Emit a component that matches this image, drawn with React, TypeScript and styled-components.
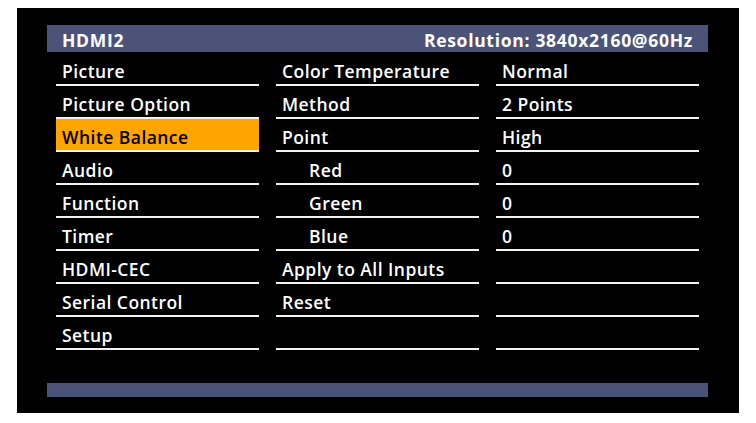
import React from "react";
import styled, { createGlobalStyle } from "styled-components";

const Global = createGlobalStyle`
  html, body { margin: 0; padding: 0; background: #ffffff; }
  body { font-family: "Open Sans", "Noto Sans", sans-serif; }
`;

const Screen = styled.div`
  box-sizing: border-box;
  margin: 8px 0 0 17px;
  width: 722px;
  height: 405px;
  background: #000000;
  padding: 17px 0 0 30px;
  display: flex;
  flex-direction: column;
`;

const Bar = styled.div`
  box-sizing: border-box;
  width: 661px;
  background: #4b5379;
`;

const HeaderBar = styled(Bar)`
  height: 27px;
  display: flex;
  align-items: center;
  justify-content: space-between;
  padding: 3px 15px 0 15px;
  color: #ffffff;
  font-weight: 700;
  font-size: 17.5px;
  letter-spacing: 0.7px;
`;

const FooterBar = styled(Bar)`
  height: 14px;
  margin-top: 33px;
`;

const Columns = styled.div`
  display: grid;
  grid-template-columns: repeat(3, 203px);
  column-gap: 17px;
  margin: 1px 0 0 9px;
`;

const Column = styled.div`
  display: flex;
  flex-direction: column;
`;

const Row = styled.div<{ $active?: boolean; $indent?: boolean }>`
  box-sizing: border-box;
  height: 33px;
  display: flex;
  align-items: center;
  padding: 4px 0 0 ${(p) => (p.$indent ? 33 : 6)}px;
  border-bottom: 2px solid ${(p) => (p.$active ? "#fff3d0" : "#f2f2f2")};
  background: ${(p) => (p.$active ? "#ffa500" : "transparent")};
  color: ${(p) => (p.$active ? "#000000" : "#ffffff")};
  font-weight: 600;
  font-size: 17.5px;
  letter-spacing: 0.45px;
  white-space: nowrap;
`;

const menu = [
  "Picture",
  "Picture Option",
  "White Balance",
  "Audio",
  "Function",
  "Timer",
  "HDMI-CEC",
  "Serial Control",
  "Setup",
];

const settings: { label: string; indent?: boolean }[] = [
  { label: "Color Temperature" },
  { label: "Method" },
  { label: "Point" },
  { label: "Red", indent: true },
  { label: "Green", indent: true },
  { label: "Blue", indent: true },
  { label: "Apply to All Inputs" },
  { label: "Reset" },
  { label: "" },
];

const values = ["Normal", "2 Points", "High", "0", "0", "0", "", "", ""];

export default function App() {
  return (
    <>
      <Global />
      <Screen>
        <HeaderBar>
          <span>HDMI2</span>
          <span>Resolution: 3840x2160@60Hz</span>
        </HeaderBar>
        <Columns>
          <Column>
            {menu.map((m) => (
              <Row key={m} $active={m === "White Balance"}>
                {m}
              </Row>
            ))}
          </Column>
          <Column>
            {settings.map((s, i) => (
              <Row key={i} $indent={s.indent}>
                {s.label}
              </Row>
            ))}
          </Column>
          <Column>
            {values.map((v, i) => (
              <Row key={i}>{v}</Row>
            ))}
          </Column>
        </Columns>
        <FooterBar />
      </Screen>
    </>
  );
}
